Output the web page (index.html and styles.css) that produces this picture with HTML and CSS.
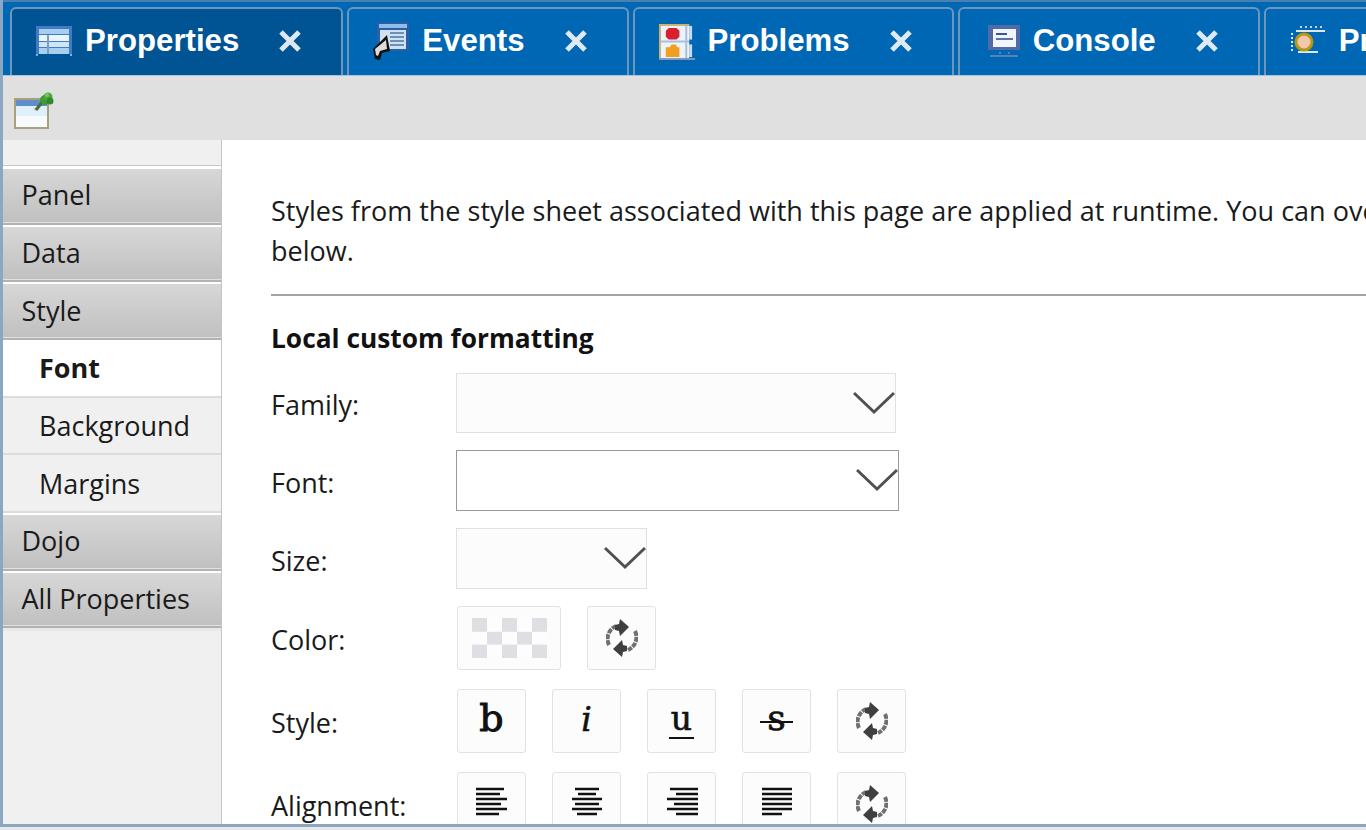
FILE: index.html
```html
<!DOCTYPE html>
<html lang="en">
<head>
    <meta charset="UTF-8">
    <meta name="viewport" content="width=device-width, initial-scale=1.0">
    <title>Properties</title>
    <link rel="stylesheet" href="styles.css">
</head>
<body>

    <svg class="defs" width="0" height="0">
        <symbol id="close" viewBox="0 0 24 24">
            <path d="M3 3 L21 21 M21 3 L3 21" stroke="#dfe9f3" stroke-width="5" fill="none"/>
        </symbol>
        <symbol id="chevron" viewBox="0 0 42 24">
            <path d="M1 2 L21 21 L41 2" stroke="#505050" stroke-width="3" fill="none"/>
        </symbol>
        <symbol id="refresh" viewBox="0 0 32 38">
            <path d="M3 26 A14 14 0 0 1 10 7" stroke="#707070" stroke-width="4" stroke-dasharray="5 1" fill="none"/>
            <path d="M29 12 A14 14 0 0 1 22 31" stroke="#707070" stroke-width="4" stroke-dasharray="5 1" fill="none"/>
            <path d="M14 0 L23 8 L14 17 L13 12 L9 11 L9 6 L13 5 Z" fill="#3f3f3f"/>
            <path d="M16 21 L7 30 L16 38 L17 33 L21 32 L21 27 L17 26 Z" fill="#3f3f3f"/>
        </symbol>
    </svg>

    <div class="frame">
        <div class="tabs">
            <div class="tab">
                <svg class="tab-icon" width="36" height="30" viewBox="0 0 36 30">
                    <rect x="0" y="0" width="36" height="28" fill="#3f7cc4"/>
                    <rect x="3" y="3" width="30" height="5" fill="#a9cdf0"/>
                    <rect x="3" y="9" width="30" height="6" fill="#eaf4fb"/>
                    <rect x="3" y="16" width="30" height="5" fill="#cfe5f5"/>
                    <rect x="3" y="22" width="30" height="6" fill="#a8cfec"/>
                    <rect x="11" y="9" width="2" height="19" fill="#7d9cc0"/>
                    <rect x="0" y="28" width="2" height="2" fill="#7db0de"/>
                    <rect x="34" y="28" width="2" height="2" fill="#7db0de"/>
                </svg>
                <span class="tab-name">Properties</span>
                <svg class="tab-close" width="24" height="24"><use href="#close"/></svg>
            </div>
            <div class="tab">
                <svg class="tab-icon" width="36" height="38" viewBox="0 0 36 38">
                    <rect x="4" y="0" width="32" height="29" fill="#2a5fa5"/>
                    <rect x="6" y="2" width="28" height="4" fill="#8fbce8"/>
                    <rect x="7" y="8" width="26" height="19" fill="#cfe2f2"/>
                    <path d="M17 11 H31 M17 15 H31 M17 19 H31 M17 23 H31" stroke="#6f8fb5" stroke-width="2"/>
                    <path d="M14 13 L17 29 L9 31 L7 38 L2 37 L0 27 Z" fill="#111"/>
                    <path d="M13 18 L14 27 L7 29 L5 34 L3 33 L2 27 Z" fill="#dcdcdc"/>
                </svg>
                <span class="tab-name">Events</span>
                <svg class="tab-close" width="24" height="24"><use href="#close"/></svg>
            </div>
            <div class="tab">
                <svg class="tab-icon" width="36" height="37" viewBox="0 0 37 38">
                    <rect x="0" y="1" width="31" height="36" fill="#eef3fa"/>
                    <rect x="0" y="1" width="2" height="36" fill="#c9b36f"/>
                    <rect x="0" y="1" width="31" height="2" fill="#c9b36f"/>
                    <rect x="2" y="18" width="29" height="2" fill="#a9bede"/>
                    <rect x="27" y="3" width="2" height="34" fill="#a9bede"/>
                    <rect x="0" y="36" width="37" height="2" fill="#8498bd"/>
                    <rect x="31" y="3" width="3" height="14" fill="#c8dcf0"/>
                    <rect x="31" y="22" width="3" height="13" fill="#c8dcf0"/>
                    <path d="M10 5 H18 L21 8 V14 L18 17 H10 L7 14 V8 Z" fill="#d9202f"/>
                    <path d="M11 25 L13 22 H17 L19 25 H21 V35 H7 V25 Z" fill="#f0a020"/>
                </svg>
                <span class="tab-name">Problems</span>
                <svg class="tab-close" width="24" height="24"><use href="#close"/></svg>
            </div>
            <div class="tab">
                <svg class="tab-icon" width="36" height="32" viewBox="-4 0 36 32">
                    <rect x="0" y="0" width="32" height="25" fill="#4f6ba8"/>
                    <rect x="5" y="4" width="23" height="18" fill="#f2f5fa"/>
                    <rect x="8" y="8" width="11" height="2" fill="#3d5590"/>
                    <rect x="8" y="13" width="17" height="2" fill="#5a74ad"/>
                    <rect x="2" y="30" width="28" height="2" fill="#5a7fb4"/>
                    <rect x="11" y="27" width="2" height="2" fill="#5a7fb4"/>
                    <rect x="20" y="27" width="2" height="2" fill="#5a7fb4"/>
                </svg>
                <span class="tab-name">Console</span>
                <svg class="tab-close" width="24" height="24"><use href="#close"/></svg>
            </div>
            <div class="tab">
                <svg class="tab-icon" width="36" height="32" viewBox="0 0 36 32">
                    <path d="M10 2 H32" stroke="#c6d6e8" stroke-width="2" stroke-dasharray="2 3"/>
                    <path d="M6 6 H35 M8 27 H28" stroke="#dce7f2" stroke-width="2"/>
                    <path d="M2 8 V28" stroke="#dce7f2" stroke-width="2" stroke-dasharray="2 2"/>
                    <circle cx="14" cy="17" r="8" fill="#f2c7ae" stroke="#b89a10" stroke-width="3"/>
                </svg>
                <span class="tab-name">Properties</span>
                <svg class="tab-close" width="24" height="24"><use href="#close"/></svg>
            </div>
        </div>

        <div class="toolbar">
            <svg width="42" height="38" viewBox="0 0 42 38">
                <rect x="1" y="6" width="35" height="31" fill="#a89f7c"/>
                <rect x="3" y="8" width="31" height="27" fill="#dff0fa"/>
                <rect x="3" y="8" width="31" height="6" fill="#5f8fc8"/>
                <rect x="3" y="24" width="31" height="11" fill="#f6fafc"/>
                <path d="M21 18 L26 15" stroke="#c9d3d8" stroke-width="3"/>
                <path d="M23 18 L30 9" stroke="#4c6a3a" stroke-width="3"/>
                <circle cx="32" cy="8" r="5" fill="#3e9a32"/>
                <circle cx="35" cy="5" r="4.5" fill="#4aa83a"/>
                <circle cx="37" cy="9" r="3.5" fill="#2f8a2a"/>
                <circle cx="34" cy="3" r="2" fill="#7cc465"/>
            </svg>
        </div>

        <div class="main">
            <div class="side">
                <div class="side-top"></div>
                <div class="cat">Panel</div>
                <div class="cat">Data</div>
                <div class="cat">Style</div>
                <div class="sub selected">Font</div>
                <div class="sub">Background</div>
                <div class="sub">Margins</div>
                <div class="cat">Dojo</div>
                <div class="cat">All Properties</div>
            </div>

            <div class="content">
                <p class="intro">Styles from the style sheet associated with this page are applied at runtime. You can override them with the settings<br>below.</p>
                <hr class="rule">
                <h2 class="section">Local custom formatting</h2>

                <div class="row row-combo">
                    <label>Family:</label>
                    <div class="combo combo-wide"><svg width="42" height="24"><use href="#chevron"/></svg></div>
                </div>
                <div class="row row-combo">
                    <label>Font:</label>
                    <div class="combo combo-focus"><svg width="42" height="24"><use href="#chevron"/></svg></div>
                </div>
                <div class="row row-combo">
                    <label>Size:</label>
                    <div class="combo combo-small"><svg width="42" height="24"><use href="#chevron"/></svg></div>
                </div>
                <div class="row row-btns">
                    <label>Color:</label>
                    <div class="btns btns-color">
                        <div class="btn btn-swatch"><div class="checker"></div></div>
                        <div class="btn"><svg width="32" height="38"><use href="#refresh"/></svg></div>
                    </div>
                </div>
                <div class="row row-btns">
                    <label>Style:</label>
                    <div class="btns">
                        <div class="btn"><span class="glyph g-bold">b</span></div>
                        <div class="btn"><span class="glyph g-italic">i</span></div>
                        <div class="btn"><span class="glyph g-under">u</span></div>
                        <div class="btn"><span class="glyph g-strike">s</span></div>
                        <div class="btn"><svg width="32" height="38"><use href="#refresh"/></svg></div>
                    </div>
                </div>
                <div class="row row-btns">
                    <label>Alignment:</label>
                    <div class="btns">
                        <div class="btn">
                            <svg class="align" width="32" height="30" viewBox="0 0 32 30">
                                <path d="M0 2 H28 M0 7 H24 M0 12 H31 M0 17 H25 M0 22 H31 M0 27 H23" stroke="#111" stroke-width="2.4"/>
                            </svg>
                        </div>
                        <div class="btn">
                            <svg class="align" width="32" height="30" viewBox="0 0 32 30">
                                <path d="M4 2 H28 M7 7 H25 M1 12 H31 M4 17 H28 M1 22 H31 M6 27 H26" stroke="#111" stroke-width="2.4"/>
                            </svg>
                        </div>
                        <div class="btn">
                            <svg class="align" width="32" height="30" viewBox="0 0 32 30">
                                <path d="M4 2 H32 M10 7 H32 M1 12 H32 M8 17 H32 M1 22 H32 M10 27 H32" stroke="#111" stroke-width="2.4"/>
                            </svg>
                        </div>
                        <div class="btn">
                            <svg class="align" width="32" height="30" viewBox="0 0 32 30">
                                <path d="M1 2 H31 M1 7 H31 M1 12 H31 M1 17 H31 M1 22 H31 M1 27 H21" stroke="#111" stroke-width="2.4"/>
                            </svg>
                        </div>
                        <div class="btn"><svg width="32" height="38"><use href="#refresh"/></svg></div>
                    </div>
                </div>
            </div>
        </div>
    </div>

</body>
</html>
```

FILE: styles.css
```css
html, body {
    margin: 0;
    height: 100%;
    overflow: hidden;
}
body {
    background-color: #e9e9e9;
    font-family: "Open Sans", "Noto Sans", sans-serif;
    color: #1a1a1a;
}
.defs {
    position: absolute;
}
.frame {
    box-sizing: border-box;
    height: 827px;
    display: flex;
    flex-direction: column;
    border-left: 3px solid #8ba7c2;
    border-bottom: 3px solid #8ba7c2;
    overflow: hidden;
}

/* tabs */
.tabs {
    display: flex;
    flex: none;
    gap: 4px;
    height: 76px;
    box-sizing: border-box;
    margin-left: -3px;
    padding: 5px 0 0 10px;
    background-color: #0067b4;
    border-top: 2px solid #4a80b0;
    border-bottom: 1px solid #a9c3dc;
}
.tab {
    flex: none;
    display: flex;
    align-items: center;
    height: 68px;
    box-sizing: border-box;
    padding: 0 39px 2px 24px;
    border: 2px solid #6e96bd;
    border-bottom: 0;
    border-radius: 6px 6px 0 0;
}
.tab:first-child {
    background-color: #005493;
}
.tab-icon {
    flex: none;
    margin-right: 13px;
}
.tab-name {
    font-family: "Liberation Sans", Arial, sans-serif;
    font-size: 31.2px;
    font-weight: bold;
    color: #fff;
    white-space: nowrap;
}
.tab-close {
    flex: none;
    margin-left: 39px;
}

/* toolbar */
.toolbar {
    flex: none;
    height: 64px;
    box-sizing: border-box;
    padding: 16px 0 0 10px;
    background-color: #e0e0e0;
}

/* main */
.main {
    flex: 1;
    display: flex;
    min-height: 0;
    background-color: #fff;
}
.side {
    flex: none;
    width: 219px;
    box-sizing: border-box;
    background-color: #f0f0f0;
    border-right: 1px solid #c4c4c4;
}
.side-top {
    height: 27px;
    background: linear-gradient(#f0f0f0 25px, #c8c8c8 25px, #c8c8c8 26px, #fff 26px);
}
.cat, .sub {
    height: 57.67px;
    box-sizing: border-box;
    display: flex;
    align-items: center;
    font-size: 27px;
    white-space: nowrap;
}
.cat {
    padding: 0 0 2px 18.5px;
    background: linear-gradient(#d7d7d7, #c0c0c0);
    border-top: 2px solid #fff;
    border-bottom: 2px solid #b2b2b2;
    box-shadow: inset 0 -1px 0 #e2e2e2;
}
.cat:last-child {
    box-shadow: inset 0 -1px 0 #e2e2e2, 0 3px 0 #e8e8e8;
}
.sub {
    padding-left: 36px;
    border-bottom: 2px solid #dcdcdc;
}
.sub.selected {
    background-color: #fff;
    font-weight: bold;
}
.content {
    flex: 1;
    min-width: 0;
    padding-left: 49px;
    overflow: hidden;
    font-size: 27px;
}
.intro {
    margin: 51px 0 0;
    line-height: 40px;
    white-space: nowrap;
}
.rule {
    margin: 23px 0 0;
    border: 0;
    height: 2px;
    background-color: #a3a3a3;
}
.section {
    margin: 24px 0 16px;
    font-size: 26.3px;
    line-height: 36px;
    font-weight: bold;
    color: #111;
}

/* form rows */
.row {
    display: flex;
    align-items: center;
}
.row label {
    flex: none;
    width: 185px;
    padding-top: 3px;
    white-space: nowrap;
}
.row-combo {
    height: 61px;
    margin-bottom: 17px;
}
.row-btns {
    height: 64px;
    margin-bottom: 19px;
}
.combo {
    box-sizing: border-box;
    height: 61px;
    display: flex;
    justify-content: flex-end;
    align-items: center;
    background-color: #fcfcfc;
    border: 1px solid #e0e0e0;
    overflow: hidden;
}
.combo svg {
    margin-top: -1px;
}
.combo-wide {
    width: 440px;
    height: 60px;
    align-self: flex-end;
}
.combo-focus {
    width: 443px;
    background-color: #fff;
    border-color: #9a9a9a;
}
.combo-small {
    width: 191px;
}
.btns {
    display: flex;
    gap: 26px;
    margin-left: 1px;
}
.btn {
    flex: none;
    box-sizing: border-box;
    width: 69px;
    height: 64px;
    display: flex;
    justify-content: center;
    align-items: center;
    background-color: #fcfcfc;
    border: 1px solid #e2e2e2;
    border-radius: 3px;
    overflow: hidden;
}
.btn-swatch {
    width: 104px;
}
.checker {
    width: 75px;
    height: 40px;
    background: repeating-conic-gradient(#fdfdfd 0 25%, #dfdfe3 0 50%) 0 0 / 30px 26.6px;
}
.glyph {
    position: relative;
    color: #111;
    line-height: 1;
    font-family: "DejaVu Serif", serif;
}
.g-bold {
    font-size: 38px;
    -webkit-text-stroke: 1px #111;
    margin-top: -7px;
}
.g-italic {
    font-style: italic;
    font-size: 33px;
    -webkit-text-stroke: 0.6px #111;
    margin-top: -4px;
}
.g-under {
    font-size: 33px;
    -webkit-text-stroke: 0.7px #111;
    margin-top: -6px;
}
.g-under::after {
    content: "";
    position: absolute;
    left: -2px;
    right: -2px;
    bottom: -4px;
    height: 2px;
    background-color: #111;
}
.g-strike {
    font-size: 36px;
    -webkit-text-stroke: 0.7px #111;
    margin-top: -6px;
}
.g-strike::after {
    content: "";
    position: absolute;
    left: -7px;
    right: -7px;
    top: 21px;
    height: 2px;
    background-color: #111;
}
.align {
    margin-top: -4px;
}
```
